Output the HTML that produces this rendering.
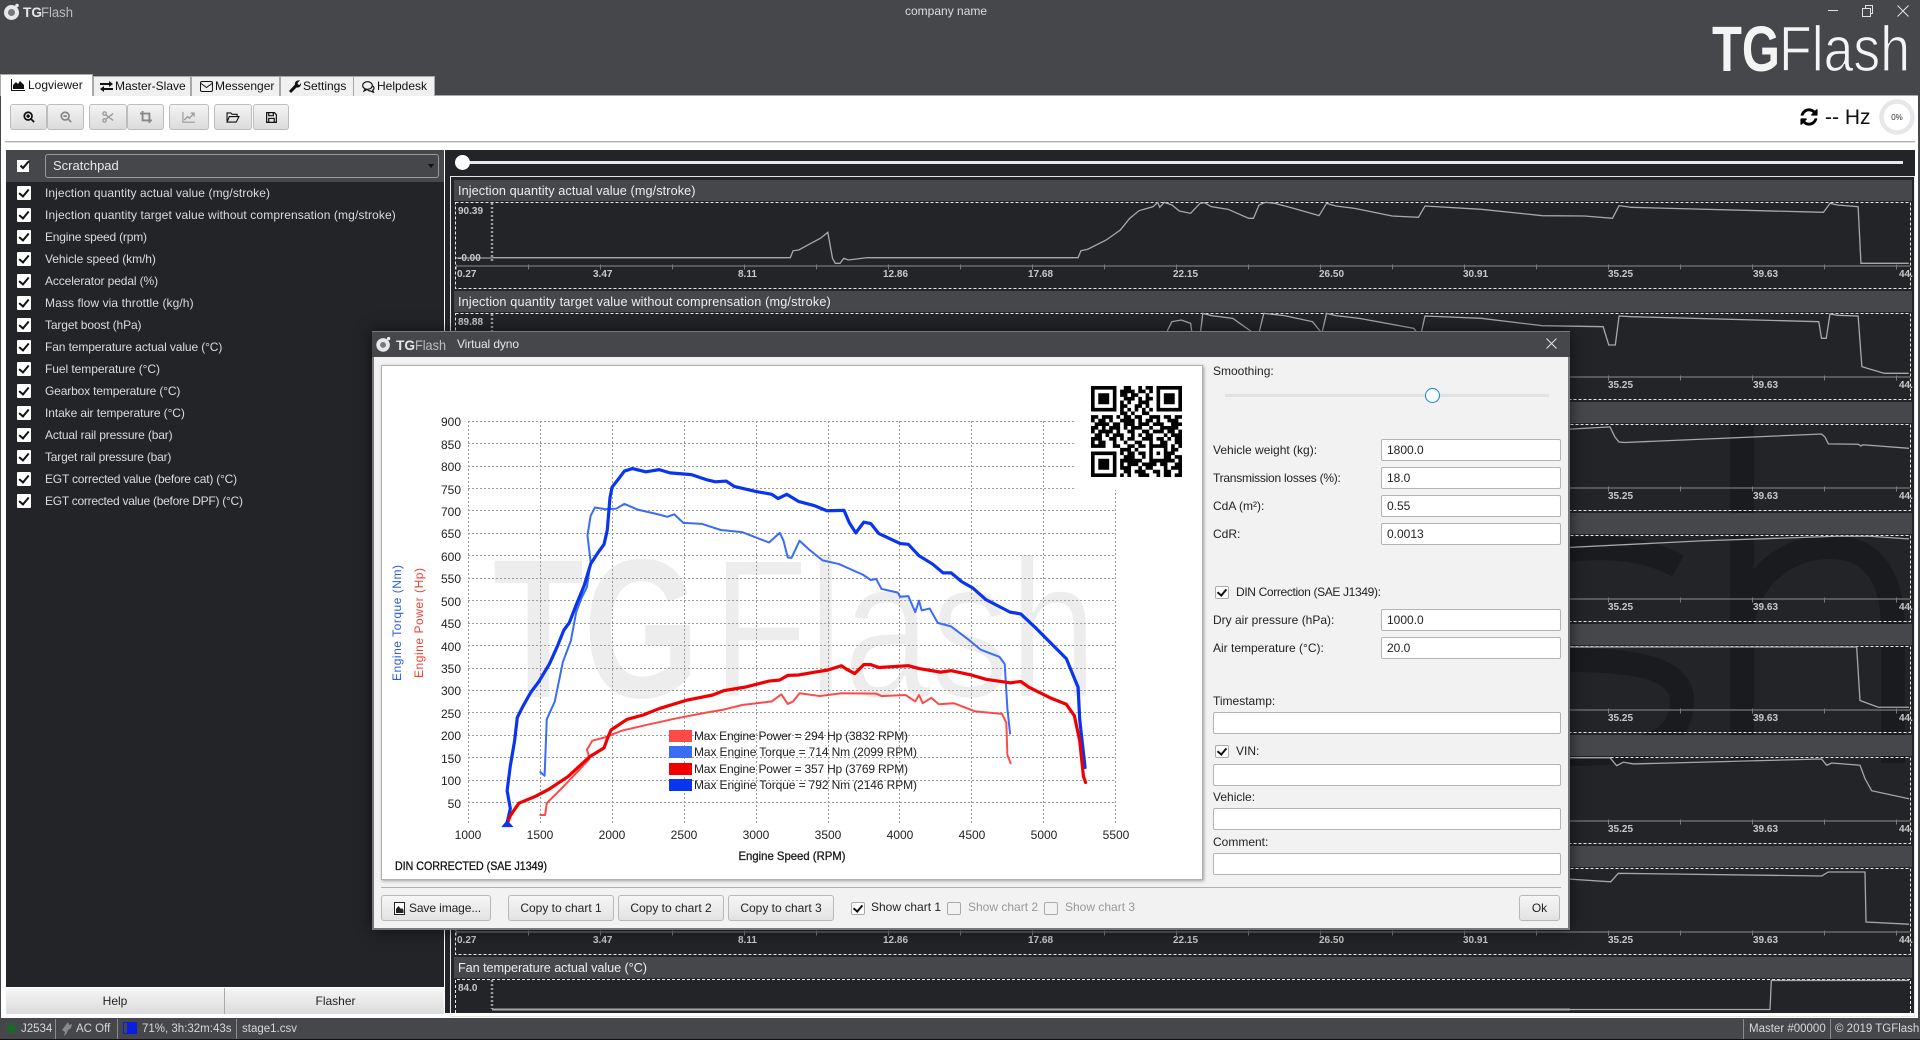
<!DOCTYPE html>
<html><head><meta charset="utf-8"><title>TGFlash</title>
<style>
html,body{margin:0;padding:0;width:1920px;height:1040px;overflow:hidden;background:#46474b;font-family:"Liberation Sans",sans-serif;font-size:12px;color:#222}
div,span{box-sizing:border-box}
.a{position:absolute}
.t{position:absolute;white-space:nowrap;line-height:16px;height:16px}
.tab{position:absolute;top:76px;height:20px;background:#f0f0f0;border:1px solid #a8a8a8;border-bottom:none}
.tab svg,.tb svg{position:absolute}
.tb{position:absolute;top:104px;height:26px;border:1px solid #bdbdbd;border-radius:3px;background:linear-gradient(#f4f4f4,#dcdcdc)}
.cb{position:absolute;width:14px;height:14px;background:#fff;border-radius:1px}
.cb:after{content:"";position:absolute;left:4px;top:1px;width:4px;height:8px;border:solid #111;border-width:0 2.5px 2.5px 0;transform:rotate(40deg)}
.l{color:#dcdcdc;left:45px}
.inp{position:absolute;height:22px;background:#fff;border:1px solid #b4b4b8;border-radius:2px;padding-left:5px;line-height:20px;color:#222}
.btn{position:absolute;top:895px;height:26px;background:linear-gradient(#f6f6f6,#e2e2e2);border:1px solid #b8b8b8;border-radius:3px;text-align:center;line-height:24px;color:#222}
.cm{position:absolute;width:14px;height:13px;background:#f2f2f2;border:1px solid #aaa;border-radius:2px}
.cm.on{background:#fff}
.cm.on:after{content:"";position:absolute;left:3px;top:0;width:4px;height:7px;border:solid #111;border-width:0 2px 2px 0;transform:rotate(40deg)}
.st{color:#d8d8d8;top:1021px;font-size:11.500px}
.sep{position:absolute;top:1019px;height:20px;width:1px;background:#8a8b8e}
svg text{font-family:"Liberation Sans",sans-serif}
.xl{fill:#c8c8c8;font-size:10px;font-weight:bold}
.bx{fill:none;stroke:#e8e8e8;stroke-width:1;stroke-dasharray:3 2}
.ax{stroke:#6a6a6a;stroke-width:1.5}
.tk{stroke:#7a7a7a;stroke-width:5;stroke-dasharray:1 71}
.vd{stroke:#999;stroke-width:2.5;stroke-dasharray:2 2}
.c{fill:none;stroke:#a8a8a8;stroke-width:1.3;vector-effect:non-scaling-stroke}
.d{fill:none;stroke-linejoin:round;stroke-linecap:round;vector-effect:non-scaling-stroke}
.yt{font-size:12px;fill:#222;text-anchor:end}
.xt{font-size:12px;fill:#222;text-anchor:middle}
.lg{font-size:12px;fill:#222}
.tl{color:#111;font-size:12px}
</style></head><body>

<!-- header -->
<svg class="a" style="left:2px;top:2px" width="20" height="20" viewBox="0 0 20 20"><circle cx="9.500" cy="10.500" r="7.500" fill="#e8e8e8"/><circle cx="9.500" cy="10.500" r="3.500" fill="#77787b"/><circle cx="15" cy="3.500" r="1.800" fill="#e8e8e8"/></svg>
<svg class="a" style="left:22px;top:4px" width="54" height="16"><text x="1" y="13" font-size="14" font-weight="bold" fill="#e6e6e6" textLength="19" lengthAdjust="spacingAndGlyphs">TG</text><text x="19" y="13" font-size="14" fill="#bdbdbd" textLength="32" lengthAdjust="spacingAndGlyphs">Flash</text></svg>
<div class="t" style="left:905px;top:3px;color:#ddd;font-size:12px">company name</div>
<svg class="a" style="left:1820px;top:0" width="100" height="22" fill="none" stroke="#e0e0e0" stroke-width="1"><path d="M8 10.500h10"/><path d="M42.500 8.500h8v8h-8zM45.500 8.500v-3h7v8h-2"/><path d="M77.500 5.500l11 11M88.500 5.500l-11 11"/></svg>
<svg class="a" style="left:1700px;top:15px" width="215" height="65"><text x="12" y="56" font-size="64" font-weight="bold" fill="#f4f4f4" textLength="68" lengthAdjust="spacingAndGlyphs">TG</text><text x="79" y="56" font-size="64" fill="#f4f4f4" stroke="#46474b" stroke-width="1.200" textLength="131" lengthAdjust="spacingAndGlyphs">Flash</text></svg>

<!-- white content -->
<div class="a" style="left:1px;top:95px;width:1917px;height:923px;background:#fff;border-top:1px solid #a8a8a8"></div>

<!-- tabs -->
<div class="tab" style="left:0;top:74px;width:93px;height:22px;background:#fff;border-bottom:none"></div>
<div class="tab" style="left:93px;width:98px"></div>
<div class="tab" style="left:191px;width:89px"></div>
<div class="tab" style="left:280px;width:74px"></div>
<div class="tab" style="left:353px;width:82px"></div>
<svg class="a" style="left:11px;top:79px" width="14" height="12" viewBox="0 0 14 12"><path d="M0 0h1v11h13v1H0z" fill="#111"/><path d="M2 10V6l3-3 2 2 2-3 4 4v4z" fill="#111"/></svg>
<div class="t tl" style="left:28px;top:77px">Logviewer</div>
<svg class="a" style="left:100px;top:81px" width="13" height="11" viewBox="0 0 13 11" fill="#111"><path d="M0 2h9V0l4 3-4 3V4H0zM13 7H4V5L0 8l4 3V9h9z"/></svg>
<div class="t tl" style="left:115px;top:78px">Master-Slave</div>
<svg class="a" style="left:200px;top:81px" width="13" height="11" viewBox="0 0 13 11" fill="none" stroke="#111"><rect x=".5" y=".5" width="12" height="10" rx="1.500"/><path d="M1 2.500l5.500 4 5.500-4"/></svg>
<div class="t tl" style="left:215px;top:78px">Messenger</div>
<svg class="a" style="left:289px;top:80px" width="12" height="13" viewBox="0 0 12 13" fill="#111"><path d="M0 11l6-6.500C5.500 2 7.500 0 11 .5L8.500 3l.5 1.500 1.500.5L12 3c.5 3-2 5-4.500 4.500L2 13z"/></svg>
<div class="t tl" style="left:303px;top:78px">Settings</div>
<svg class="a" style="left:362px;top:81px" width="13" height="12" viewBox="0 0 13 12" fill="none" stroke="#111" stroke-width="1.200"><ellipse cx="5.500" cy="4.500" rx="4.800" ry="3.800"/><path d="M3 8l-1 2 3-1.500"/><path d="M11 5c1.500 1.500 1.200 3.500-.3 4.300l.8 2-3-1.300c-1.500 0-2.500-.5-3-1.500"/></svg>
<div class="t tl" style="left:377px;top:78px">Helpdesk</div>

<!-- toolbar -->
<div class="tb" style="left:10px;width:37px"><svg style="left:12px;top:6px" width="12" height="12" viewBox="0 0 14 14" fill="none" stroke="#111" stroke-width="2"><circle cx="6" cy="6" r="4.500"/><path d="M9.500 9.500L13 13M4 6h4M6 4v4"/></svg></div>
<div class="tb" style="left:47px;width:37px"><svg style="left:12px;top:6px" width="12" height="12" viewBox="0 0 14 14" fill="none" stroke="#888" stroke-width="2"><circle cx="6" cy="6" r="4.500"/><path d="M9.500 9.500L13 13M4 6h4"/></svg></div>
<div class="tb" style="left:89px;width:38px"><svg style="left:12px;top:6px" width="12" height="12" viewBox="0 0 14 14" fill="none" stroke="#999" stroke-width="1.500"><circle cx="3" cy="3" r="2"/><circle cx="3" cy="11" r="2"/><path d="M4.500 4.500L13 11M4.500 9.500L13 3"/></svg></div>
<div class="tb" style="left:127px;width:37px"><svg style="left:12px;top:6px" width="12" height="12" viewBox="0 0 14 14" fill="none" stroke="#888" stroke-width="2.200"><path d="M3 0v11h11M0 3h11v11"/></svg></div>
<div class="tb" style="left:169px;width:40px"><svg style="left:12px;top:6px" width="13" height="12" viewBox="0 0 15 14" fill="none" stroke="#999" stroke-width="1.300"><path d="M1 1v12h14"/><path d="M2.500 10.500l4-4 2 2 5-5.500M10 2.500h4v4" stroke-width="1.500"/></svg></div>
<div class="tb" style="left:214px;width:38px"><svg style="left:11px;top:7px" width="14" height="11" viewBox="0 0 15 12" fill="none" stroke="#111" stroke-width="1.200"><path d="M1 10V1h4l1.500 1.500H12V5M1 11h10l3-6H3.500L1 11z"/></svg></div>
<div class="tb" style="left:253px;width:36px"><svg style="left:12px;top:7px" width="11" height="11" viewBox="0 0 12 12" fill="none" stroke="#111" stroke-width="1.300"><path d="M.7.700h8.500l2.100 2.100v8.500H.7z"/><path d="M3 1v3h5V1M3 11V7h6v4"/></svg></div>
<div class="a" style="left:5px;top:141px;width:1910px;height:1px;background:#b0b0b0"></div>
<div class="a" style="left:5px;top:142px;width:1910px;height:1px;background:#e0e0e0"></div>
<svg class="a" style="left:1799px;top:107px" width="20" height="20" viewBox="0 0 1792 1792" fill="#000"><path d="M1639 1056q0 5-1 7-64 268-268 434.500t-478 166.500q-146 0-282.500-55t-243.500-157l-129 129q-19 19-45 19t-45-19-19-45v-448q0-26 19-45t45-19h448q26 0 45 19t19 45-19 45l-137 137q71 66 161 102t187 36q134 0 250-65t186-179q11-17 53-117 8-23 30-23h192q13 0 22.500 9.500t9.500 22.500zm25-800v448q0 26-19 45t-45 19h-448q-26 0-45-19t-19-45 19-45l138-138q-148-137-349-137-134 0-250 65t-186 179q-11 17-53 117-8 23-30 23h-199q-13 0-22.500-9.500t-9.500-22.500v-7q65-268 270-434.500t480-166.500q146 0 284 55.500t245 156.500l130-129q19-19 45-19t45 19 19 45z"/></svg>
<div class="t" style="left:1825px;top:106px;font-size:21px;line-height:23px;height:23px;color:#111">-- Hz</div>
<svg class="a" style="left:1879px;top:99px" width="36" height="36"><circle cx="18" cy="18" r="15.500" fill="none" stroke="#e6e7e8" stroke-width="4.500"/><text x="18" y="21" font-size="8" text-anchor="middle" fill="#333">0%</text></svg>

<!-- left panel -->
<div class="a" style="left:6px;top:150px;width:438px;height:837px;background:#232428"></div>
<div class="a" style="left:6px;top:150px;width:438px;height:32px;background:#46474b"></div>
<svg class="a" style="left:17px;top:159px" width="14" height="13" viewBox="0 0 14 13"><rect x="1" y="2" width="10" height="10" fill="#fff" stroke="#fff" stroke-width="2"/><path d="M3.500 6.500l2.500 2.500 6-7" fill="none" stroke="#111" stroke-width="2"/></svg>
<div class="a" style="left:45px;top:154px;width:394px;height:24px;border:1px solid #9a9b9e;border-radius:3px;background:#46474b"></div>
<div class="t" style="left:53px;top:158px;font-size:13px;color:#e8e8e8">Scratchpad</div>
<svg class="a" style="left:427px;top:163px" width="8" height="6"><path d="M1 1h6L4 5z" fill="#111"/></svg>

<div class="cb" style="left:17px;top:186px"></div><div class="t l" style="top:185px;letter-spacing:.085px">Injection quantity actual value (mg/stroke)</div>
<div class="cb" style="left:17px;top:208px"></div><div class="t l" style="top:207px;letter-spacing:.113px">Injection quantity target value without comprensation (mg/stroke)</div>
<div class="cb" style="left:17px;top:230px"></div><div class="t l" style="top:229px;letter-spacing:-.2px">Engine speed (rpm)</div>
<div class="cb" style="left:17px;top:252px"></div><div class="t l" style="top:251px;letter-spacing:-.06px">Vehicle speed (km/h)</div>
<div class="cb" style="left:17px;top:274px"></div><div class="t l" style="top:273px;letter-spacing:-.115px">Accelerator pedal (%)</div>
<div class="cb" style="left:17px;top:296px"></div><div class="t l" style="top:295px;letter-spacing:.09px">Mass flow via throttle (kg/h)</div>
<div class="cb" style="left:17px;top:318px"></div><div class="t l" style="top:317px;letter-spacing:-.13px">Target boost (hPa)</div>
<div class="cb" style="left:17px;top:340px"></div><div class="t l" style="top:339px;letter-spacing:-.11px">Fan temperature actual value (°C)</div>
<div class="cb" style="left:17px;top:362px"></div><div class="t l" style="top:361px;letter-spacing:-.06px">Fuel temperature (°C)</div>
<div class="cb" style="left:17px;top:384px"></div><div class="t l" style="top:383px;letter-spacing:-.15px">Gearbox temperature (°C)</div>
<div class="cb" style="left:17px;top:406px"></div><div class="t l" style="top:405px;letter-spacing:-.09px">Intake air temperature (°C)</div>
<div class="cb" style="left:17px;top:428px"></div><div class="t l" style="top:427px;letter-spacing:-.15px">Actual rail pressure (bar)</div>
<div class="cb" style="left:17px;top:450px"></div><div class="t l" style="top:449px;letter-spacing:-.2px">Target rail pressure (bar)</div>
<div class="cb" style="left:17px;top:472px"></div><div class="t l" style="top:471px;letter-spacing:-.2px">EGT corrected value (before cat) (°C)</div>
<div class="cb" style="left:17px;top:494px"></div><div class="t l" style="top:493px;letter-spacing:-.26px">EGT corrected value (before DPF) (°C)</div>

<div class="a" style="left:6px;top:987px;width:438px;height:1px;background:#fff"></div>
<div class="a" style="left:6px;top:988px;width:219px;height:26px;background:linear-gradient(#f6f6f6,#dcdcdc);border-right:1px solid #aaa;text-align:center;line-height:26px">Help</div>
<div class="a" style="left:225px;top:988px;width:221px;height:26px;background:linear-gradient(#f6f6f6,#dcdcdc);text-align:center;line-height:26px;clip-path:inset(0 2px 0 0)">Flasher</div>

<!-- right pane -->
<div class="a" style="left:445px;top:150px;width:1470px;height:863px;background:#232428"></div>
<div class="a" style="left:462px;top:161px;width:1441px;height:3px;background:#e8e8e8"></div>
<div class="a" style="left:455px;top:155px;width:15px;height:15px;border-radius:50%;background:#fff"></div>

<svg class="a" style="left:0;top:0" width="1920" height="1040">
<rect x="450.500" y="176.500" width="1464" height="840" fill="none" stroke="#e6e6e6"/>
<!-- big watermark -->
<g fill="none" stroke="#1a1b1e" stroke-width="24">
<path d="M1742 424V763"/>
<path d="M1742 625C1750 572 1790 547 1830 547C1875 547 1893 580 1893 630V763"/>
<path d="M1678 566C1650 550 1610 545 1570 550"/>
<path d="M1570 660C1640 660 1682 670 1682 700C1682 745 1640 754 1570 754"/>
</g>

<g id="r0">
<rect x="454" y="180" width="1458" height="21" fill="#46474b"/>
<rect class="bx" x="455.500" y="202.500" width="1455" height="86"/>
<path class="vd" d="M492 203V261"/><path d="M456 258H492" stroke="#888" stroke-width="1.500"/>
<path class="ax" d="M456 266H1910"/><path class="tk" d="M456 267H1910"/>
<text x="458" y="214" class="xl">90.39</text><text x="458" y="261" class="xl">-0.00</text>
<text x="457" y="277" class="xl">0.27</text><text x="593" y="277" class="xl">3.47</text><text x="738" y="277" class="xl">8.11</text><text x="883" y="277" class="xl">12.86</text><text x="1028" y="277" class="xl">17.68</text><text x="1173" y="277" class="xl">22.15</text><text x="1319" y="277" class="xl">26.50</text><text x="1463" y="277" class="xl">30.91</text><text x="1608" y="277" class="xl">35.25</text><text x="1753" y="277" class="xl">39.63</text><text x="1899" y="277" class="xl">44.</text>
</g>
<g transform="translate(0,111)">
<rect x="454" y="180" width="1458" height="21" fill="#46474b"/>
<rect class="bx" x="455.500" y="202.500" width="1455" height="86"/>
<path class="vd" d="M492 203V261"/><path class="ax" d="M456 266H1910"/><path class="tk" d="M456 267H1910"/>
<text x="458" y="214" class="xl">89.88</text>
<text x="1608" y="277" class="xl">35.25</text><text x="1753" y="277" class="xl">39.63</text><text x="1899" y="277" class="xl">44.</text>
</g>
<g transform="translate(0,222)">
<rect x="454" y="180" width="1458" height="21" fill="#46474b"/>
<rect class="bx" x="455.500" y="202.500" width="1455" height="86"/>
<path class="ax" d="M456 266H1910"/><path class="tk" d="M456 267H1910"/>
<text x="1608" y="277" class="xl">35.25</text><text x="1753" y="277" class="xl">39.63</text><text x="1899" y="277" class="xl">44.</text>
</g>
<g transform="translate(0,333)">
<rect x="454" y="180" width="1458" height="21" fill="#46474b"/>
<rect class="bx" x="455.500" y="202.500" width="1455" height="86"/>
<path class="ax" d="M456 266H1910"/><path class="tk" d="M456 267H1910"/>
<text x="1608" y="277" class="xl">35.25</text><text x="1753" y="277" class="xl">39.63</text><text x="1899" y="277" class="xl">44.</text>
</g>
<g transform="translate(0,444)">
<rect x="454" y="180" width="1458" height="21" fill="#46474b"/>
<rect class="bx" x="455.500" y="202.500" width="1455" height="86"/>
<path class="ax" d="M456 266H1910"/><path class="tk" d="M456 267H1910"/>
<text x="1608" y="277" class="xl">35.25</text><text x="1753" y="277" class="xl">39.63</text><text x="1899" y="277" class="xl">44.</text>
</g>
<g transform="translate(0,555)">
<rect x="454" y="180" width="1458" height="21" fill="#46474b"/>
<rect class="bx" x="455.500" y="202.500" width="1455" height="86"/>
<path class="ax" d="M456 266H1910"/><path class="tk" d="M456 267H1910"/>
<text x="1608" y="277" class="xl">35.25</text><text x="1753" y="277" class="xl">39.63</text><text x="1899" y="277" class="xl">44.</text>
</g>
<g transform="translate(0,666)">
<rect x="454" y="180" width="1458" height="21" fill="#46474b"/>
<rect class="bx" x="455.500" y="202.500" width="1455" height="86"/>
<path class="ax" d="M456 266H1910"/><path class="tk" d="M456 267H1910"/>
<text x="457" y="277" class="xl">0.27</text><text x="593" y="277" class="xl">3.47</text><text x="738" y="277" class="xl">8.11</text><text x="883" y="277" class="xl">12.86</text><text x="1028" y="277" class="xl">17.68</text><text x="1173" y="277" class="xl">22.15</text><text x="1319" y="277" class="xl">26.50</text><text x="1463" y="277" class="xl">30.91</text><text x="1608" y="277" class="xl">35.25</text><text x="1753" y="277" class="xl">39.63</text><text x="1899" y="277" class="xl">44.</text>
</g>
<rect x="454" y="957" width="1458" height="21" fill="#46474b"/>
<path d="M455.500 1013V979.500H1910.500V1013" class="bx"/>
<path class="vd" d="M492 980V1009"/>
<text x="458" y="991" class="xl">84.0</text>

<!-- traces row 0/1 -->
<g transform="translate(450,150) scale(.9375,.33333)">
<polyline class="c" points="45,323 363,323 366,302 372,300 385,280 395,265 403,247 408,325 411,340 416,340 420,325 425,330 445,323 670,323 673,302 680,298 700,270 715,240 725,205 735,182 750,170 755,157 757,172 762,157 770,165 778,183 790,190 800,160 805,158 812,170 830,178 852,205 857,205 863,165 870,157 880,160 900,175 927,197 935,160 945,168 965,175 1005,198 1033,202 1040,168 1100,178 1165,197 1210,198 1240,205 1247,167 1260,172 1465,187 1472,160 1480,165 1502,170 1505,340 1556,340"/>
<polyline class="c" points="762,560 770,515 780,510 790,520 792,560 800,560 803,490 812,497 835,505 855,545 862,560 868,490 890,497 920,515 930,550 935,490 945,497 970,505 1028,535 1035,560 1040,498 1100,505 1165,527 1230,530 1236,585 1243,585 1247,498 1260,500 1460,515 1463,565 1468,565 1472,492 1480,496 1502,498 1506,650 1512,655 1530,670 1556,670"/>
</g>
<!-- traces right -->
<g transform="translate(1570,330) scale(.33333,.44643)">
<polyline class="c" points="0,222 120,217 135,240 147,251 165,252 755,233 765,240 775,255 865,256 873,260 878,257 1017,265"/>
<polyline class="c" points="0,487 400,472 800,462 900,462 1017,468"/>
<polyline class="c" points="0,710 860,710 870,830 925,845 1017,845"/>
<polyline class="c" points="0,958 120,958 140,976 160,968 190,972 755,961 770,975 785,970 870,975 885,1005 905,1032 1017,1050"/>
<polyline class="c" points="0,1230 122,1236 145,1217 755,1223 775,1214 885,1214 888,1326 1017,1331"/>
<polyline class="c" points="0,1522 600,1522 604,1457 1017,1457"/>
<polyline class="c" points="-3234,1522 0,1522" style="stroke-width:2"/>
</g>
</svg>

<!-- titles -->
<div class="t" style="left:458px;top:183px;font-size:12.700px;color:#eee;letter-spacing:.08px">Injection quantity actual value (mg/stroke)</div>
<div class="t" style="left:458px;top:294px;font-size:12.700px;color:#eee;letter-spacing:.15px">Injection quantity target value without comprensation (mg/stroke)</div>
<div class="t" style="left:458px;top:960px;font-size:12.700px;color:#eee;letter-spacing:-.07px">Fan temperature actual value (°C)</div>

<!-- status bar -->
<div class="a" style="left:0;top:1018px;width:1920px;height:21px;background:#46474b"></div>
<div class="a" style="left:0;top:1039px;width:1920px;height:1px;background:#111"></div>
<svg class="a" style="left:5px;top:1022px" width="13" height="13" viewBox="0 0 14 14" fill="#186a22"><path d="M5 1h4v4h4v4H9v4H5V9H1V5h4z"/></svg>
<div class="t st" style="left:21px">J2534</div><div class="sep" style="left:55px"></div>
<svg class="a" style="left:61px;top:1022px" width="12" height="14" viewBox="0 0 12 14" fill="#8a8a8a"><path d="M7 0l1 3 3-1-1 4-3 2-1 3-3 3 1-4-3-2 3-4z"/></svg>
<div class="t st" style="left:76px">AC Off</div><div class="sep" style="left:117px"></div>
<div class="a" style="left:123px;top:1022px;width:14px;height:12px;border:1px solid #0a1ee0;background:#0a1ee0;box-shadow:inset 3px 0 0 #46474b"></div>
<div class="t st" style="left:142px">71%, 3h:32m:43s</div><div class="sep" style="left:236px"></div>
<div class="t st" style="left:242px">stage1.csv</div>
<div class="sep" style="left:1743px"></div><div class="t st" style="left:1749px">Master #00000</div>
<div class="sep" style="left:1830px"></div><div class="t st" style="left:1835px">© 2019 TGFlash</div>

<!-- modal -->
<div class="a" style="left:372px;top:331px;width:1198px;height:599px;background:#f2f2f2;border:2px solid #77787b;box-shadow:0 0 14px rgba(0,0,0,.6)"></div>
<div class="a" style="left:372px;top:332px;width:1198px;height:25px;background:#46474b"></div>
<svg class="a" style="left:375px;top:336px" width="17" height="17" viewBox="0 0 20 20"><circle cx="9.500" cy="10.500" r="8" fill="#e8e8e8"/><circle cx="9.500" cy="10.500" r="3.500" fill="#77787b"/><circle cx="16" cy="3" r="2" fill="#e8e8e8"/></svg>
<svg class="a" style="left:396px;top:336px" width="54" height="16"><text x="0" y="14" font-size="14" font-weight="bold" fill="#e6e6e6" textLength="19" lengthAdjust="spacingAndGlyphs">TG</text><text x="19" y="14" font-size="14" fill="#bdbdbd" textLength="31" lengthAdjust="spacingAndGlyphs">Flash</text></svg>
<div class="t" style="left:457px;top:336px;color:#e6e6e6;letter-spacing:-.1px">Virtual dyno</div>
<svg class="a" style="left:1545px;top:337px" width="13" height="13" fill="none" stroke="#e6e6e6"><path d="M1.500 1.500l10 10M11.500 1.500l-10 10"/></svg>

<!-- dyno chart -->
<div class="a" style="left:381px;top:365px;width:822px;height:515px;background:#fff;border:1px solid #b0b0b0;box-shadow:1px 1px 3px rgba(0,0,0,.35)"></div>
<svg class="a" style="left:0;top:0" width="1920" height="1040">
<text x="493" y="697" font-size="198" font-weight="bold" fill="#ededed" textLength="206" lengthAdjust="spacingAndGlyphs">TG</text>
<text x="712" y="697" font-size="198" fill="#ededed" stroke="#fff" stroke-width="2.500" textLength="385" lengthAdjust="spacingAndGlyphs">Flash</text>
<path fill="none" stroke="#9a9a9a" stroke-dasharray="2 2" d="M468 421.500H1115M468 443.500H1115M468 466.500H1115M468 488.500H1115M468 510.500H1115M468 533.500H1115M468 555.500H1115M468 578.500H1115M468 600.500H1115M468 623.500H1115M468 645.500H1115M468 668.500H1115M468 690.500H1115M468 712.500H1115M468 735.500H1115M468 757.500H1115M468 780.500H1115M468 802.500H1115M468.500 421V825M540.500 421V825M612.500 421V825M684.500 421V825M756.500 421V825M828.500 421V825M899.500 421V825M971.500 421V825M1043.500 421V825M1115.500 421V825"/>
<rect x="1074" y="372" width="120" height="118" fill="#fff"/>
<path fill="none" stroke="#000" stroke-width="1" transform="translate(1091,386) scale(3.64)" d="M0 .5h7M9 .5h2M13 .5h1M15 .5h2M18 .5h7M0 1.500h1M6 1.500h1M8 1.500h4M13 1.500h2M16 1.500h1M18 1.500h1M24 1.500h1M0 2.500h1M2 2.500h3M6 2.500h1M8 2.500h2M11 2.500h2M15 2.500h1M18 2.500h1M20 2.500h3M24 2.500h1M0 3.500h1M2 3.500h3M6 3.500h1M9 3.500h3M13 3.500h1M15 3.500h2M18 3.500h1M20 3.500h3M24 3.500h1M0 4.500h1M2 4.500h3M6 4.500h1M8 4.500h1M10 4.500h1M13 4.500h3M18 4.500h1M20 4.500h3M24 4.500h1M0 5.500h1M6 5.500h1M8 5.500h2M12 5.500h2M15 5.500h1M18 5.500h1M24 5.500h1M0 6.500h7M8 6.500h1M10 6.500h1M12 6.500h1M14 6.500h1M16 6.500h1M18 6.500h7M8 7.500h2M11 7.500h1M14 7.500h2M0 8.500h2M3 8.500h3M7 8.500h1M9 8.500h2M12 8.500h2M16 8.500h3M20 8.500h2M23 8.500h2M0 9.500h1M2 9.500h2M5 9.500h1M8 9.500h4M13 9.500h1M15 9.500h2M18 9.500h1M21 9.500h3M1 10.500h4M6 10.500h2M9 10.500h3M13 10.500h3M17 10.500h3M22 10.500h3M0 11.500h2M3 11.500h1M5 11.500h3M9 11.500h1M11 11.500h3M16 11.500h1M19 11.500h5M0 12.500h1M2 12.500h4M7 12.500h1M10 12.500h2M14 12.500h2M17 12.500h3M21 12.500h2M24 12.500h1M1 13.500h2M4 13.500h1M6 13.500h3M11 13.500h1M13 13.500h1M15 13.500h2M20 13.500h1M22 13.500h3M0 14.500h3M5 14.500h2M8 14.500h1M10 14.500h2M14 14.500h3M18 14.500h2M21 14.500h1M23 14.500h2M0 15.500h1M2 15.500h2M6 15.500h1M9 15.500h1M12 15.500h2M16 15.500h1M19 15.500h2M23 15.500h2M0 16.500h4M6 16.500h2M10 16.500h2M13 16.500h2M16 16.500h5M22 16.500h1M24 16.500h1M8 17.500h3M12 17.500h1M16 17.500h1M20 17.500h1M22 17.500h2M0 18.500h7M8 18.500h1M10 18.500h2M13 18.500h2M16 18.500h1M18 18.500h1M20 18.500h3M0 19.500h1M6 19.500h1M9 19.500h3M14 19.500h1M16 19.500h1M20 19.500h2M23 19.500h2M0 20.500h1M2 20.500h3M6 20.500h1M8 20.500h6M16 20.500h7M24 20.500h1M0 21.500h1M2 21.500h3M6 21.500h1M8 21.500h1M10 21.500h3M14 21.500h4M19 21.500h2M23 21.500h2M0 22.500h1M2 22.500h3M6 22.500h1M8 22.500h3M13 22.500h1M15 22.500h2M20 22.500h1M22 22.500h3M0 23.500h1M6 23.500h1M9 23.500h2M12 23.500h3M17 23.500h2M20 23.500h2M24 23.500h1M0 24.500h7M8 24.500h1M10 24.500h1M13 24.500h3M18 24.500h1M20 24.500h2M23 24.500h2"/>
<g transform="translate(370,330) scale(.53562,.35714)">
<polyline class="d" stroke="#ff4a4a" stroke-width="2" points="318,1358 327,1358 330,1325 360,1280 395,1225 410,1200 405,1175 415,1150 440,1140 470,1122 510,1108 570,1088 625,1072 660,1063 695,1050 750,1040 768,1020 780,1047 790,1040 802,1017 840,1025 880,1017 945,1018 955,1025 1000,1022 1018,1040 1025,1022 1032,1045 1048,1030 1062,1048 1090,1045 1130,1068 1180,1075 1188,1100 1190,1190 1196,1213"/>
<polyline class="d" stroke="#3a6cf4" stroke-width="2" points="318,1238 326,1248 330,1090 345,1040 360,930 375,870 385,790 395,750 405,720 412,650 406,575 412,520 420,497 440,502 460,500 475,487 500,503 540,517 555,523 568,516 585,540 620,543 655,560 695,566 745,595 765,568 772,590 780,637 787,638 802,590 820,615 845,645 875,655 920,685 935,700 945,697 955,725 985,735 990,747 1005,745 1018,790 1025,758 1030,785 1045,780 1060,820 1085,830 1120,870 1140,895 1175,915 1185,935 1190,1060 1195,1130"/>
<polyline class="d" stroke="#0a35ee" stroke-width="3.200" points="255,1386 262,1340 256,1290 262,1220 270,1150 275,1085 285,1055 300,1015 315,985 335,935 350,885 362,840 372,820 385,770 400,715 412,655 425,625 437,600 443,560 448,470 452,440 465,415 475,395 490,388 515,397 540,391 560,400 600,405 630,420 645,425 665,423 680,438 720,452 750,460 762,472 778,460 800,480 830,492 853,506 885,505 895,540 907,568 922,538 935,542 950,570 990,598 1005,600 1025,632 1050,655 1070,680 1085,680 1105,705 1125,722 1150,755 1195,790 1215,795 1240,830 1270,875 1300,920 1315,975 1322,1000 1325,1090 1335,1225"/>
<polyline class="d" stroke="#f00000" stroke-width="3.200" points="255,1386 262,1360 278,1325 310,1305 335,1285 370,1250 410,1195 437,1170 443,1145 450,1120 480,1090 510,1078 540,1060 590,1037 640,1022 660,1010 700,1000 745,983 765,980 780,967 800,966 830,958 855,952 880,940 890,950 905,962 922,937 935,937 950,945 1005,940 1025,948 1065,958 1085,954 1120,965 1150,978 1195,988 1215,984 1230,1000 1270,1030 1300,1048 1315,1080 1325,1150 1332,1250 1336,1267"/>
<path d="M245 1392L256 1372 268 1392z" fill="#0a35ee"/>
</g>
<text class="yt" x="461" y="426">900</text><text class="yt" x="461" y="449">850</text><text class="yt" x="461" y="471">800</text><text class="yt" x="461" y="494">750</text><text class="yt" x="461" y="516">700</text><text class="yt" x="461" y="538">650</text><text class="yt" x="461" y="561">600</text><text class="yt" x="461" y="583">550</text><text class="yt" x="461" y="606">500</text><text class="yt" x="461" y="628">450</text><text class="yt" x="461" y="651">400</text><text class="yt" x="461" y="673">350</text><text class="yt" x="461" y="695">300</text><text class="yt" x="461" y="718">250</text><text class="yt" x="461" y="740">200</text><text class="yt" x="461" y="763">150</text><text class="yt" x="461" y="785">100</text><text class="yt" x="461" y="808">50</text>
<text class="xt" x="468" y="839">1000</text><text class="xt" x="540" y="839">1500</text><text class="xt" x="612" y="839">2000</text><text class="xt" x="684" y="839">2500</text><text class="xt" x="756" y="839">3000</text><text class="xt" x="828" y="839">3500</text><text class="xt" x="900" y="839">4000</text><text class="xt" x="972" y="839">4500</text><text class="xt" x="1044" y="839">5000</text><text class="xt" x="1116" y="839">5500</text>
<text class="xt" x="792" y="860" fill="#111" stroke="#111" stroke-width=".3" textLength="107" lengthAdjust="spacingAndGlyphs">Engine Speed (RPM)</text>
<text x="395" y="870" font-size="12" fill="#111" stroke="#111" stroke-width=".3" textLength="152" lengthAdjust="spacingAndGlyphs">DIN CORRECTED (SAE J1349)</text>
<text transform="translate(401,623) rotate(-90)" text-anchor="middle" font-size="12" fill="#2a5ce8" textLength="116">Engine Torque (Nm)</text>
<text transform="translate(423,623) rotate(-90)" text-anchor="middle" font-size="12" fill="#f04030" textLength="110">Engine Power (Hp)</text>
<rect x="669" y="730" width="23" height="12" fill="#ff4a4a"/><text class="lg" x="694" y="740" textLength="214">Max Engine Power = 294 Hp (3832 RPM)</text>
<rect x="669" y="746" width="23" height="12" fill="#3a6cf4"/><text class="lg" x="694" y="756" textLength="223">Max Engine Torque = 714 Nm (2099 RPM)</text>
<rect x="669" y="763" width="23" height="12" fill="#f00000"/><text class="lg" x="694" y="773" textLength="214">Max Engine Power = 357 Hp (3769 RPM)</text>
<rect x="669" y="779" width="23" height="12" fill="#0a35ee"/><text class="lg" x="694" y="789" textLength="223">Max Engine Torque = 792 Nm (2146 RPM)</text>
</svg>

<!-- modal right controls -->
<div class="t" style="left:1213px;top:363px">Smoothing:</div>
<div class="a" style="left:1225px;top:394px;width:324px;height:3px;background:#e2e2e2"></div>
<div class="a" style="left:1425px;top:388px;width:15px;height:15px;border-radius:50%;background:#fff;border:1.500px solid #0a84d8"></div>
<div class="t" style="left:1213px;top:442px">Vehicle weight (kg):</div><div class="inp" style="left:1381px;top:439px;width:180px">1800.0</div>
<div class="t" style="left:1213px;top:470px;letter-spacing:-.25px">Transmission losses (%):</div><div class="inp" style="left:1381px;top:467px;width:180px">18.0</div>
<div class="t" style="left:1213px;top:498px">CdA (m²):</div><div class="inp" style="left:1381px;top:495px;width:180px">0.55</div>
<div class="t" style="left:1213px;top:526px">CdR:</div><div class="inp" style="left:1381px;top:523px;width:180px">0.0013</div>
<div class="cm on" style="left:1215px;top:586px"></div><div class="t" style="left:1236px;top:584px;letter-spacing:-.35px">DIN Correction (SAE J1349):</div>
<div class="t" style="left:1213px;top:612px">Dry air pressure (hPa):</div><div class="inp" style="left:1381px;top:609px;width:180px">1000.0</div>
<div class="t" style="left:1213px;top:640px">Air temperature (°C):</div><div class="inp" style="left:1381px;top:637px;width:180px">20.0</div>
<div class="t" style="left:1213px;top:693px">Timestamp:</div><div class="inp" style="left:1213px;top:712px;width:348px"></div>
<div class="cm on" style="left:1215px;top:745px"></div><div class="t" style="left:1236px;top:743px">VIN:</div><div class="inp" style="left:1213px;top:764px;width:348px"></div>
<div class="t" style="left:1213px;top:789px">Vehicle:</div><div class="inp" style="left:1213px;top:808px;width:348px"></div>
<div class="t" style="left:1213px;top:834px">Comment:</div><div class="inp" style="left:1213px;top:853px;width:348px"></div>
<div class="a" style="left:381px;top:887px;width:1180px;height:1px;background:#b0b0b0"></div>

<div class="btn" style="left:381px;width:110px;padding-left:18px;letter-spacing:-.1px">Save image...</div>
<svg class="a" style="left:394px;top:902px" width="11" height="13" viewBox="0 0 11 13"><path d="M.5.500h10v12H.5z" fill="#fff" stroke="#222"/><path d="M2 7l2.500-3L7 7l1-1 1.500 2v3H2z" fill="#222"/></svg>
<div class="btn" style="left:508px;width:106px">Copy to chart 1</div>
<div class="btn" style="left:618px;width:106px">Copy to chart 2</div>
<div class="btn" style="left:728px;width:106px">Copy to chart 3</div>
<div class="cm on" style="left:851px;top:902px"></div><div class="t" style="left:871px;top:899px">Show chart 1</div>
<div class="cm" style="left:947px;top:902px"></div><div class="t" style="left:968px;top:899px;color:#999">Show chart 2</div>
<div class="cm" style="left:1044px;top:902px"></div><div class="t" style="left:1065px;top:899px;color:#999">Show chart 3</div>
<div class="btn" style="left:1519px;width:41px">Ok</div>

</body></html>
